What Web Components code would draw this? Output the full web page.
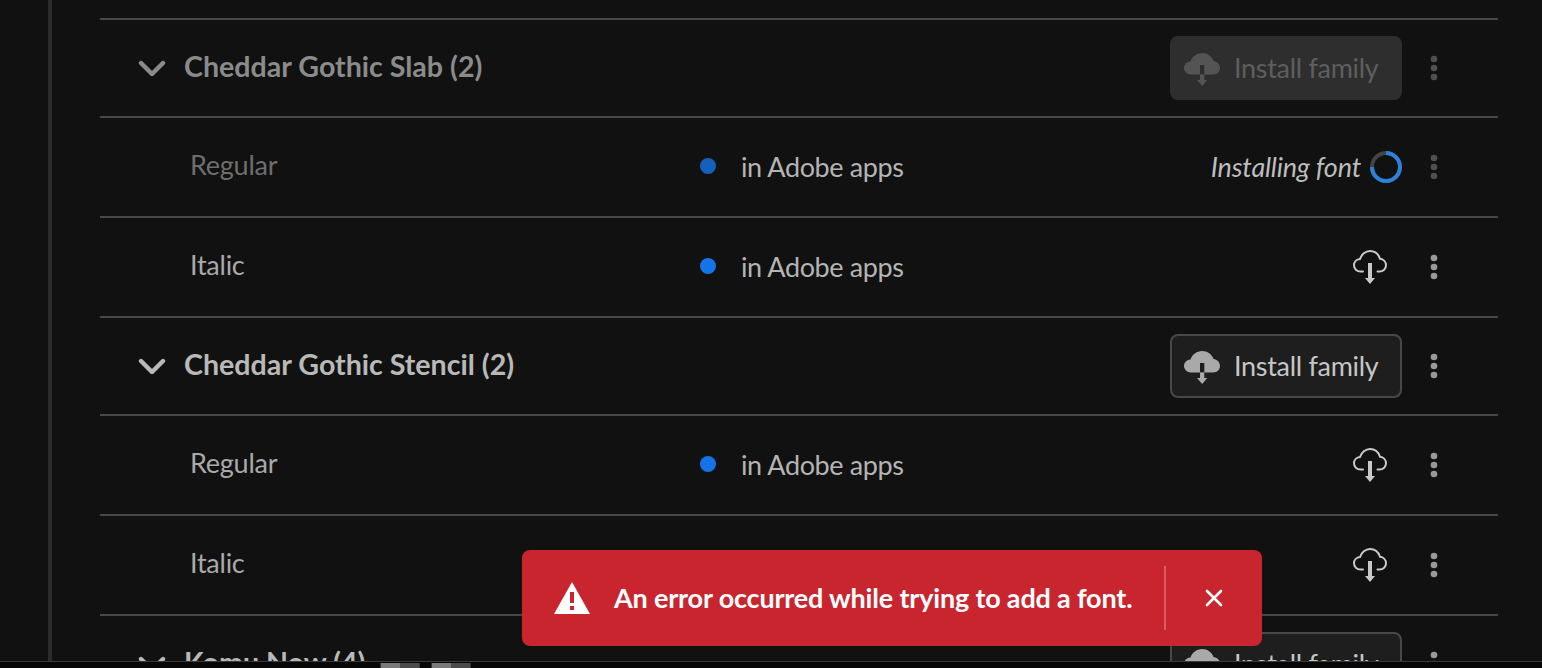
<!DOCTYPE html>
<html lang="en">
<head>
<meta charset="utf-8">
<title>Fonts</title>
<style>
  html, body { margin: 0; height: 100%; background: #111; overflow: hidden; }
  body { font-family: Lato, "Noto Sans", sans-serif; }
</style>
</head>
<body>
<fc-page>
  <fc-family name="Cheddar Gothic Slab (2)" disabled>
    <fc-style name="Regular" state="installing" dim></fc-style>
    <fc-style name="Italic"></fc-style>
  </fc-family>
  <fc-family name="Cheddar Gothic Stencil (2)">
    <fc-style name="Regular"></fc-style>
    <fc-style name="Italic"></fc-style>
  </fc-family>
  <fc-family name="Komu Now (4)"></fc-family>
  <fc-toast slot="toast">An error occurred while trying to add a font.</fc-toast>
</fc-page>

<script>
const DOTS = `
  <svg width="8" height="26" viewBox="0 0 8 26" fill="currentColor" aria-hidden="true">
    <circle cx="4" cy="4" r="3.3"/><circle cx="4" cy="13" r="3.3"/><circle cx="4" cy="22" r="3.3"/>
  </svg>`;

class FCPage extends HTMLElement {
  constructor() {
    super();
    const template = document.createElement( 'template' );
    template.innerHTML = /* template */ `
      <style>
        :host {
          background: #111;
          box-sizing: border-box;
          display: flex;
          flex-direction: column;
          height: 668px;
          position: relative;
        }
        div[part=shell] {
          border-bottom: 1px solid #3a3a3a;
          display: flex;
          flex: none;
          height: 661px;
          overflow: hidden;
        }
        div[part=rail] {
          border-right: 4px solid #2b2b2b;
          flex: none;
          width: 48px;
        }
        div[part=list] {
          border-top: 2px solid #474747;
          flex: none;
          margin: 18px 0 0 48px;
          width: 1398px;
        }
        div[part=strip] {
          background: #070707;
          display: flex;
          flex: 1;
          gap: 11px;
          padding: 1px 0 0 380px;
        }
        div[part=strip] span {
          background: linear-gradient( 90deg, #7a7a7a 50%, #4c4c4c 50% );
          border-left: 1px solid #333;
          border-right: 1px solid #333;
          box-sizing: border-box;
          width: 40px;
        }
        ::slotted( fc-toast ) {
          left: 522px;
          position: absolute;
          top: 550px;
        }
      </style>
      <div part="shell">
        <div part="rail"></div>
        <div part="list"><slot></slot></div>
      </div>
      <div part="strip"><span></span><span></span></div>
      <slot name="toast"></slot>
    `;
    this.attachShadow( {mode: 'open'} );
    this.shadowRoot.appendChild( template.content.cloneNode( true ) );
  }
}

class FCFamily extends HTMLElement {
  constructor() {
    super();
    const template = document.createElement( 'template' );
    template.innerHTML = /* template */ `
      <style>
        :host {
          color: #b9b9b9;
          display: block;
        }
        :host( [disabled] ) {
          color: #8b8b8b;
        }
        div[part=header] {
          align-items: center;
          border-bottom: 2px solid #474747;
          box-sizing: border-box;
          display: flex;
          height: 98px;
          padding: 0 32px 0 38px;
        }
        svg[part=chevron] {
          flex: none;
        }
        h2 {
          flex: 1;
          font-size: 28.6px;
          font-weight: 700;
          line-height: 36px;
          margin: 0 0 5px 18px;
          white-space: nowrap;
        }
        button {
          align-items: center;
          background: #1e1e1e;
          border: 2px solid #484848;
          border-radius: 8px;
          box-sizing: border-box;
          color: #c6c6c6;
          display: flex;
          font: inherit;
          font-size: 27px;
          gap: 14px;
          height: 64px;
          letter-spacing: -0.3px;
          padding: 0 0 0 12px;
          width: 232px;
        }
        button span {
          margin-bottom: 2px;
        }
        button svg {
          color: #a9a9a9;
          flex: none;
          margin-top: 2px;
        }
        :host( [disabled] ) button {
          background: #2e2e2e;
          border-color: #2e2e2e;
          color: #5e5e5e;
        }
        :host( [disabled] ) button svg {
          color: #545454;
        }
        .stem {
          fill: #1e1e1e;
        }
        :host( [disabled] ) .stem {
          fill: #2e2e2e;
        }
        div[part=more] {
          color: #999;
          display: flex;
          flex: none;
          justify-content: center;
          width: 64px;
        }
        :host( [disabled] ) div[part=more] {
          color: #4f4f4f;
        }
      </style>
      <div part="header">
        <svg part="chevron" width="28" height="16" viewBox="0 0 28 16" fill="none" stroke="currentColor" stroke-width="4.400" stroke-linecap="round" stroke-linejoin="round" aria-hidden="true"><path d="M3 3l11 11L25 3"/></svg>
        <h2></h2>
        <button type="button">
          <svg width="36" height="33" viewBox="0 0 36 33" fill="currentColor" aria-hidden="true">
            <path d="M7 21.500C3 21.500 0 18.500 0 15C0 11.500 2.800 8.600 6.500 8.500C8 3.500 13 0 18 0C23.500 0 28 3.500 29.500 8C33.300 8.500 36 11.300 36 15C36 18.700 33 21.500 29 21.500Z"/>
            <rect class="stem" x="16" y="12" width="4.300" height="9.500"/>
            <rect x="16" y="21.500" width="4.300" height="6"/>
            <path d="M13 27h10.300l-5.150 6z"/>
          </svg>
          <span>Install family</span>
        </button>
        <div part="more">${DOTS}</div>
      </div>
      <slot></slot>
    `;
    this.attachShadow( {mode: 'open'} );
    this.shadowRoot.appendChild( template.content.cloneNode( true ) );
  }

  connectedCallback() {
    this.shadowRoot.querySelector( 'h2' ).textContent = this.getAttribute( 'name' );
  }
}

class FCStyle extends HTMLElement {
  constructor() {
    super();
    const template = document.createElement( 'template' );
    template.innerHTML = /* template */ `
      <style>
        :host {
          color: #a9a9a9;
          display: block;
        }
        :host( [dim] ) {
          color: #6e6e6e;
        }
        div[part=row] {
          align-items: center;
          border-bottom: 2px solid #474747;
          box-sizing: border-box;
          display: grid;
          font-size: 27px;
          grid-template-columns: 510px 1fr auto;
          height: 100px;
          padding: 0 32px 0 90px;
        }
        span[part=name] {
          letter-spacing: -0.25px;
          line-height: 34px;
          margin-bottom: 5px;
        }
        div[part=status] {
          align-items: center;
          color: #b4b4b4;
          display: flex;
          gap: 25px;
          letter-spacing: -0.4px;
        }
        div[part=status] span {
          margin-bottom: 2px;
        }
        i[part=dot] {
          background: #1473e6;
          border-radius: 50%;
          flex: none;
          height: 16px;
          margin-top: -3px;
          width: 16px;
        }
        :host( [dim] ) i[part=dot] {
          background: #1560bb;
        }
        div[part=actions] {
          align-items: center;
          display: flex;
        }
        em {
          color: #bdbdbd;
          font-size: 27px;
          letter-spacing: -0.2px;
          margin-bottom: 2px;
          margin-right: 9px;
        }
        svg[part=install] {
          color: #c9c9c9;
          flex: none;
          margin-right: 15px;
        }
        div[part=more] {
          color: #999;
          display: flex;
          justify-content: center;
          width: 64px;
        }
        :host( [dim] ) div[part=more] {
          color: #4f4f4f;
        }
      </style>
      <div part="row">
        <span part="name"></span>
        <div part="status"><i part="dot"></i><span>in Adobe apps</span></div>
        <div part="actions">
          <span part="action"></span>
          <div part="more">${DOTS}</div>
        </div>
      </div>
    `;
    this.attachShadow( {mode: 'open'} );
    this.shadowRoot.appendChild( template.content.cloneNode( true ) );
  }

  connectedCallback() {
    this.shadowRoot.querySelector( '[part=name]' ).textContent = this.getAttribute( 'name' );
    this._render();
  }

  _render() {
    const action = this.shadowRoot.querySelector( '[part=action]' );
    action.style.cssText = 'display:flex;align-items:center';
    if( this.getAttribute( 'state' ) === 'installing' ) {
      action.innerHTML = /* template */ `
        <em>Installing font</em>
        <svg width="32" height="32" viewBox="0 0 32 32" fill="none" stroke-width="4" aria-hidden="true">
          <circle cx="16" cy="16" r="14" stroke="#444"/>
          <path d="M16 2A14 14 0 1 1 2 16" stroke="#2b80e0"/>
        </svg>`;
    } else {
      action.innerHTML = /* template */ `
        <svg part="install" width="34" height="34" viewBox="0 0 34 34" aria-hidden="true">
          <path d="M10 21.500H7.500C3.800 21.500 1 18.800 1 15.300C1 11.800 3.700 9.200 7 9C8.500 4.500 12.500 1 17 1C21.800 1 25.600 4.300 27 8.800C30.400 9.200 33 11.900 33 15.300C33 18.800 30.200 21.500 26.500 21.500H24.500" fill="none" stroke="currentColor" stroke-width="2" stroke-linecap="round"/>
          <rect x="15" y="13" width="4" height="15" fill="currentColor"/>
          <path d="M12 28h10l-5 6z" fill="currentColor"/>
        </svg>`;
    }
  }
}

class FCToast extends HTMLElement {
  constructor() {
    super();
    const template = document.createElement( 'template' );
    template.innerHTML = /* template */ `
      <style>
        :host {
          align-items: center;
          background: #c9252f;
          border-radius: 8px;
          box-sizing: border-box;
          color: #fff;
          display: flex;
          font-size: 27px;
          font-weight: 700;
          height: 96px;
          padding: 0 0 0 32px;
          width: 740px;
        }
        svg[part=alert] {
          flex: none;
          margin-right: 24px;
        }
        span[part=text] {
          letter-spacing: -0.18px;
          margin-bottom: 2px;
          white-space: nowrap;
        }
        div[part=close] {
          align-items: center;
          align-self: center;
          border-left: 2px solid #dc5a62;
          display: flex;
          height: 64px;
          justify-content: center;
          margin-left: auto;
          width: 96px;
        }
      </style>
      <svg part="alert" width="36" height="32" viewBox="0 0 36 32" aria-hidden="true">
        <path fill="#fff" fill-rule="evenodd" d="M18 0L36 32H0ZM16 10V21H20V10ZM16 24V28H20V24Z"/>
      </svg>
      <span part="text"><slot></slot></span>
      <div part="close">
        <svg width="18" height="18" viewBox="0 0 18 18" stroke="#fff" stroke-width="2.600" stroke-linecap="round" aria-hidden="true"><path d="M2 2l14 14M16 2L2 16"/></svg>
      </div>
    `;
    this.attachShadow( {mode: 'open'} );
    this.shadowRoot.appendChild( template.content.cloneNode( true ) );
  }
}

window.customElements.define( 'fc-page', FCPage );
window.customElements.define( 'fc-family', FCFamily );
window.customElements.define( 'fc-style', FCStyle );
window.customElements.define( 'fc-toast', FCToast );
</script>
</body>
</html>
